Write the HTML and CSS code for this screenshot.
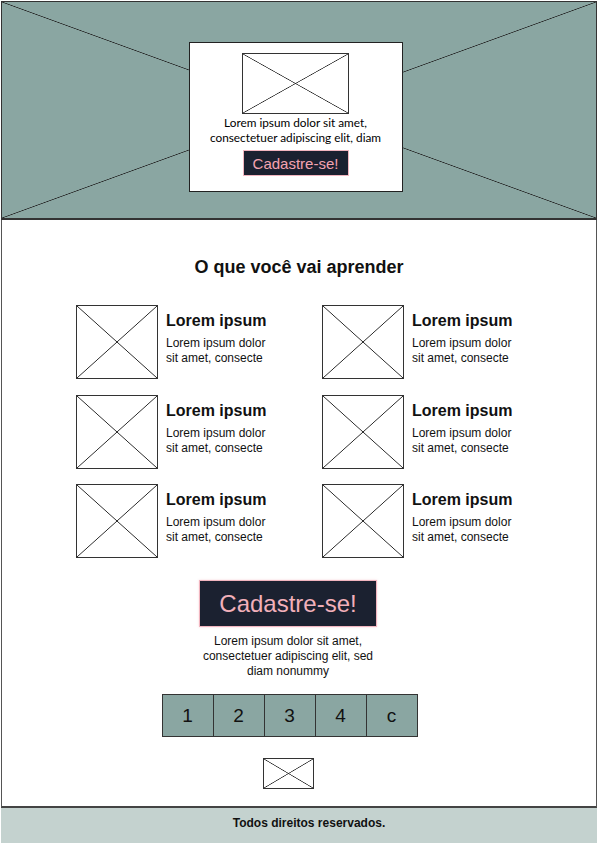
FILE: index.html
```html
<!DOCTYPE html>
<html lang="pt-BR">
<head>
    <meta charset="UTF-8">
    <meta name="viewport" content="width=device-width, initial-scale=1.0">
    <title>O que você vai aprender</title>
    <link rel="stylesheet" href="styles.css">
</head>
<body>
    <div class="page">
        <header class="hero placeholder">
            <div class="hero-card">
                <div class="placeholder hero-img"></div>
                <p class="hero-text">Lorem ipsum dolor sit amet,<br>consectetuer adipiscing elit, diam</p>
                <button class="btn btn-small">Cadastre-se!</button>
            </div>
        </header>

        <main class="content">
            <h2 class="section-title">O que você vai aprender</h2>

            <div class="topics">
                <div class="topic">
                    <div class="placeholder topic-img"></div>
                    <div class="topic-body">
                        <h3>Lorem ipsum</h3>
                        <p>Lorem ipsum dolor<br>sit amet, consecte</p>
                    </div>
                </div>
                <div class="topic">
                    <div class="placeholder topic-img"></div>
                    <div class="topic-body">
                        <h3>Lorem ipsum</h3>
                        <p>Lorem ipsum dolor<br>sit amet, consecte</p>
                    </div>
                </div>
                <div class="topic">
                    <div class="placeholder topic-img"></div>
                    <div class="topic-body">
                        <h3>Lorem ipsum</h3>
                        <p>Lorem ipsum dolor<br>sit amet, consecte</p>
                    </div>
                </div>
                <div class="topic">
                    <div class="placeholder topic-img"></div>
                    <div class="topic-body">
                        <h3>Lorem ipsum</h3>
                        <p>Lorem ipsum dolor<br>sit amet, consecte</p>
                    </div>
                </div>
                <div class="topic">
                    <div class="placeholder topic-img"></div>
                    <div class="topic-body">
                        <h3>Lorem ipsum</h3>
                        <p>Lorem ipsum dolor<br>sit amet, consecte</p>
                    </div>
                </div>
                <div class="topic">
                    <div class="placeholder topic-img"></div>
                    <div class="topic-body">
                        <h3>Lorem ipsum</h3>
                        <p>Lorem ipsum dolor<br>sit amet, consecte</p>
                    </div>
                </div>
            </div>

            <div class="signup">
                <button class="btn btn-large">Cadastre-se!</button>
                <p class="signup-text">Lorem ipsum dolor sit amet, consectetuer adipiscing elit, sed diam nonummy</p>
                <div class="pager">
                    <span>1</span>
                    <span>2</span>
                    <span>3</span>
                    <span>4</span>
                    <span>c</span>
                </div>
                <div class="placeholder logo-img"></div>
            </div>
        </main>

        <footer class="footer">Todos direitos reservados.</footer>
    </div>
</body>
</html>
```

FILE: styles.css
```css
body {
    margin: 0;
    padding: 0;
    background: #ffffff;
    color: #111111;
    font-family: "Liberation Sans", Arial, sans-serif;
}
.page {
    margin: 1px 1px 0 1px;
}
/* image placeholder: box with an X */
.placeholder {
    border: 1px solid #333333;
    box-sizing: border-box;
    background:
        linear-gradient(to top right, transparent calc(50% - 0.7px), #222222 50%, transparent calc(50% + 0.7px)),
        linear-gradient(to bottom right, transparent calc(50% - 0.7px), #222222 50%, transparent calc(50% + 0.7px));
}
.hero {
    height: 219px;
    background-color: #8aa6a2;
    border: 1px solid #333333;
    border-bottom: 2px solid #333333;
    padding: 40px 7px 0 0;
    display: flex;
    justify-content: center;
    align-items: flex-start;
}
.hero-card {
    width: 214px;
    height: 150px;
    box-sizing: border-box;
    background: #ffffff;
    border: 1px solid #222222;
    display: flex;
    flex-direction: column;
    align-items: center;
    padding-top: 10px;
}
.hero-img {
    width: 107px;
    height: 61px;
}
.hero-text {
    margin: 2px 0 0;
    font-family: Lato, "Open Sans", sans-serif;
    font-size: 11.8px;
    line-height: 14.5px;
    text-align: center;
    color: #000000;
    white-space: nowrap;
}
.btn {
    display: block;
    background: #1b2130;
    color: #f4a3b1;
    border: 1px solid #f1b5bf;
    font-family: "Liberation Sans", Arial, sans-serif;
    cursor: pointer;
    padding: 0;
}
.btn-small {
    width: 106px;
    height: 26px;
    margin-top: 5px;
    font-size: 15px;
}
.content {
    border-left: 1px solid #555555;
    border-right: 1px solid #555555;
    border-bottom: 2px solid #444444;
    padding: 37px 0 17px;
}
.section-title {
    margin: 0;
    font-size: 18px;
    line-height: 20px;
    text-align: center;
    font-weight: bold;
    color: #111111;
}
.topics {
    margin-top: 28px;
    display: grid;
    grid-template-columns: 246px 200px;
    row-gap: 15.5px;
    justify-content: center;
}
.topic {
    display: flex;
    gap: 8px;
}
.topic-img {
    width: 82px;
    height: 74px;
    flex-shrink: 0;
}
.topic-body h3 {
    margin: 6px 0 0;
    font-size: 16px;
    line-height: 20px;
    font-weight: bold;
}
.topic-body p {
    margin: 5px 0 0;
    font-size: 12px;
    line-height: 15px;
}
.signup {
    display: flex;
    flex-direction: column;
    align-items: center;
    padding-right: 22px;
    margin-top: 22px;
}
.btn-large {
    width: 178px;
    height: 47px;
    font-size: 24px;
    color: #f2b0ba;
    box-shadow: 0 0 2px rgba(241, 181, 191, 0.6);
}
.signup-text {
    margin: 7px 0 0;
    max-width: 180px;
    font-size: 12px;
    line-height: 15px;
    text-align: center;
}
.pager {
    margin-top: 15px;
    margin-left: 3px;
    display: flex;
    border: 1px solid #333333;
    background: #8aa6a2;
}
.pager span {
    width: 50px;
    height: 41px;
    display: flex;
    align-items: center;
    justify-content: center;
    font-size: 19px;
    border-left: 1px solid #333333;
}
.pager span:first-child {
    border-left: none;
}
.logo-img {
    margin-top: 21px;
    width: 51px;
    height: 31px;
}
.footer {
    height: 35px;
    box-sizing: border-box;
    background: #c4d2cf;
    display: flex;
    justify-content: center;
    padding: 8px 0 0 20px;
    font-size: 12px;
    line-height: 15px;
    font-weight: bold;
}
```
